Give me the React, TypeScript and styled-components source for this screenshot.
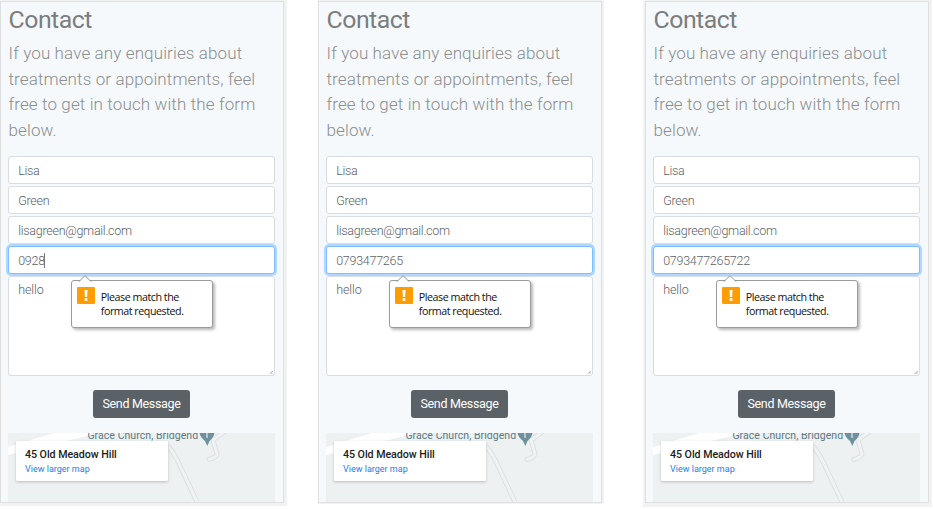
import React from "react";
import styled, { createGlobalStyle } from "styled-components";

const GlobalStyle = createGlobalStyle`
  * { box-sizing: border-box; }
  html, body { margin: 0; background: #fff; overflow: hidden; }
  body { font-family: Roboto, "Liberation Sans", sans-serif; }
  h2, p { margin: 0; }
`;

const Page = styled.main`
  width: 933px;
  height: 509px;
  display: flex;
  align-items: flex-start;
  overflow: hidden;
`;

const Frame = styled.section<{ $w: number; $h: number; $left: number; $gap: number }>`
  flex: none;
  width: ${(p) => p.$w}px;
  height: ${(p) => p.$h}px;
  margin-left: ${(p) => p.$gap}px;
  padding: 1px 0 0 ${(p) => p.$left}px;
  background: #f1f2f2;
`;

const Panel = styled.div`
  width: 284px;
  height: 502px;
  padding: 0 8px 0 7px;
  border: 1px solid #dddfe0;
  background: #f5f9fc;
  display: flex;
  flex-direction: column;
`;

const Title = styled.h2`
  height: 39px;
  padding: 3px 0 0 0.6px;
  font-size: 24.8px;
  line-height: 30px;
  font-weight: 400;
  letter-spacing: -0.5px;
  color: #7b7d7e;
  white-space: nowrap;
`;

const Intro = styled.p`
  height: 115px;
  padding-left: 0.5px;
  font-size: 17px;
  line-height: 25.6px;
  font-weight: 300;
  letter-spacing: 0.12px;
  color: #8b8e90;
  white-space: nowrap;
`;

const Form = styled.form`
  display: flex;
  flex-direction: column;
  gap: 2px;
  width: 267px;
`;

const Field = styled.div<{ $focused?: boolean }>`
  height: 28px;
  padding: 0 9.2px;
  display: flex;
  align-items: center;
  border: 1px solid ${(p) => (p.$focused ? "#80bdff" : "#d7dde3")};
  border-radius: 3px;
  background: #fff;
  box-shadow: ${(p) => (p.$focused ? "0 0 0 2px #b0d8ff" : "none")};
  font-size: 12.5px;
  font-weight: 300;
  letter-spacing: -0.27px;
  color: #5c6268;
`;

const Caret = styled.span`
  width: 1px;
  height: 15px;
  margin-left: -0.6px;
  background: #777;
`;

const MessageBox = styled.div`
  position: relative;
  height: 100px;
  padding: 4px 9.2px;
  border: 1px solid #d7dde3;
  border-radius: 3px;
  background: #fff;
  font-size: 12.5px;
  line-height: 18px;
  font-weight: 300;
  letter-spacing: -0.1px;
  color: #5c6268;
`;

const Grip = styled.svg`
  position: absolute;
  right: 1px;
  bottom: 1px;
`;

const Tooltip = styled.div`
  position: absolute;
  left: 61.6px;
  top: 3px;
  width: 142px;
  height: 48px;
  padding: 6px 5.6px;
  display: flex;
  gap: 5.6px;
  border: 1px solid #999b9d;
  border-radius: 3px;
  background: #fff;
  box-shadow: 2px 2px 3px rgba(0, 0, 0, 0.28);
`;

const Arrow = styled.svg`
  position: absolute;
  left: 6px;
  top: -6px;
`;

const WarnIcon = styled.svg`
  flex: none;
`;

const TipText = styled.span`
  padding-top: 3px;
  font-family: "Open Sans", "Noto Sans", sans-serif;
  font-size: 10.7px;
  line-height: 14px;
  font-weight: 400;
  letter-spacing: -0.46px;
  color: #111;
  white-space: nowrap;
`;

const SendButton = styled.button`
  align-self: center;
  width: 97px;
  height: 28.5px;
  margin: 13.5px 0 15px;
  padding: 0;
  border: 0;
  border-radius: 3px;
  background: #5a6268;
  color: #fff;
  font: 400 12.5px/28px Roboto, sans-serif;
  letter-spacing: -0.32px;
  white-space: nowrap;
`;

const MapView = styled.div`
  position: relative;
  width: 267px;
  height: 69px;
  overflow: hidden;
  background: #edf1f2;
`;

const Roads = styled.svg`
  display: block;
`;

const PlaceName = styled.span`
  position: absolute;
  left: 79.4px;
  top: -4px;
  font-size: 10.5px;
  line-height: 14px;
  letter-spacing: 0.06px;
  color: #5b7883;
  white-space: nowrap;
`;

const PlaceCard = styled.div`
  position: absolute;
  left: 8px;
  top: 8px;
  width: 152px;
  height: 40px;
  padding: 7px 9px 5px;
  display: flex;
  flex-direction: column;
  border-radius: 1px;
  background: #fff;
  box-shadow: 0 1px 3px rgba(0, 0, 0, 0.22);
`;

const Address = styled.span`
  font-size: 10.7px;
  line-height: 14px;
  font-weight: 500;
  letter-spacing: -0.06px;
  color: #1c1c1c;
  white-space: nowrap;
`;

const MapLink = styled.span`
  font-size: 9px;
  line-height: 14px;
  color: #1a80e8;
  white-space: nowrap;
`;

function ValidationTip() {
  return (
    <Tooltip>
      <Arrow width="14" height="7" viewBox="0 0 14 7">
        <path d="M1 7 L7 1 L13 7Z" fill="#fff" />
        <path d="M0.5 6.2 H1.2 L7 0.7 L12.8 6.2 H13.5" fill="none" stroke="#999b9d" />
      </Arrow>
      <WarnIcon width="18" height="18" viewBox="0 0 18 18">
        <rect width="18" height="17" rx="1" fill="#ff9c00" />
        <path d="M7.4 3H10.6L10.1 10H7.9Z" fill="#fff" />
        <rect x="7.6" y="11.2" width="2.8" height="2.7" fill="#fff" />
      </WarnIcon>
      <TipText>
        Please match the
        <br />
        format requested.
      </TipText>
    </Tooltip>
  );
}

function MapPreview() {
  return (
    <MapView>
      <Roads width="267" height="69" viewBox="0 0 267 69">
        <path d="M0 14 L46 0 H91 L0 22Z" fill="#fff" />
        <path d="M160 13 Q168 23 173 35 L189 69" fill="none" stroke="#dcdfe1" strokeWidth="5" />
        <path d="M160 13 Q168 23 173 35 L189 69" fill="none" stroke="#f0f2f3" strokeWidth="3" />
        <path d="M216 -1 L205 7 L209 21 Q209 24 201 26.5" fill="none" stroke="#dcdfe1" strokeWidth="5" strokeLinecap="round" />
        <path d="M216 -1 L205 7 L209 21 Q209 24 201 26.5" fill="none" stroke="#f0f2f3" strokeWidth="3" strokeLinecap="round" />
        <path d="M191.5 0 H206.5 Q206 4 201.5 8 L199.3 13 L197 8 Q192 4 191.5 0Z" fill="#6f919e" />
        <path d="M199 0 V5" stroke="#dce6e9" strokeWidth="1.3" />
      </Roads>
      <PlaceName>Grace Church, Bridgend</PlaceName>
      <PlaceCard>
        <Address>45 Old Meadow Hill</Address>
        <MapLink>View larger map</MapLink>
      </PlaceCard>
    </MapView>
  );
}

function ContactPanel({ phone, caret }: { phone: string; caret?: boolean }) {
  return (
    <Panel>
      <Title>Contact</Title>
      <Intro>
        If you have any enquiries about
        <br />
        treatments or appointments, feel
        <br />
        free to get in touch with the form
        <br />
        below.
      </Intro>
      <Form>
        <Field>Lisa</Field>
        <Field>Green</Field>
        <Field>lisagreen@gmail.com</Field>
        <Field $focused>
          {phone}
          {caret && <Caret />}
        </Field>
        <MessageBox>
          hello
          <Grip width="5" height="5" viewBox="0 0 5 5">
            <path d="M2 4.7 L4.7 2" stroke="#888" strokeWidth="0.8" />
            <path d="M3.7 4.7 L4.7 3.7" stroke="#888" strokeWidth="0.8" />
          </Grip>
          <ValidationTip />
        </MessageBox>
      </Form>
      <SendButton>Send Message</SendButton>
      <MapPreview />
    </Panel>
  );
}

const frames = [
  { w: 287, h: 506, left: 0, gap: 0, phone: "0928", caret: true },
  { w: 286, h: 504, left: 0, gap: 31, phone: "0793477265" },
  { w: 289, h: 507, left: 2, gap: 39, phone: "0793477265722" },
];

export default function App() {
  return (
    <>
      <GlobalStyle />
      <Page>
        {frames.map((f) => (
          <Frame key={f.phone} $w={f.w} $h={f.h} $left={f.left} $gap={f.gap}>
            <ContactPanel phone={f.phone} caret={f.caret} />
          </Frame>
        ))}
      </Page>
    </>
  );
}
